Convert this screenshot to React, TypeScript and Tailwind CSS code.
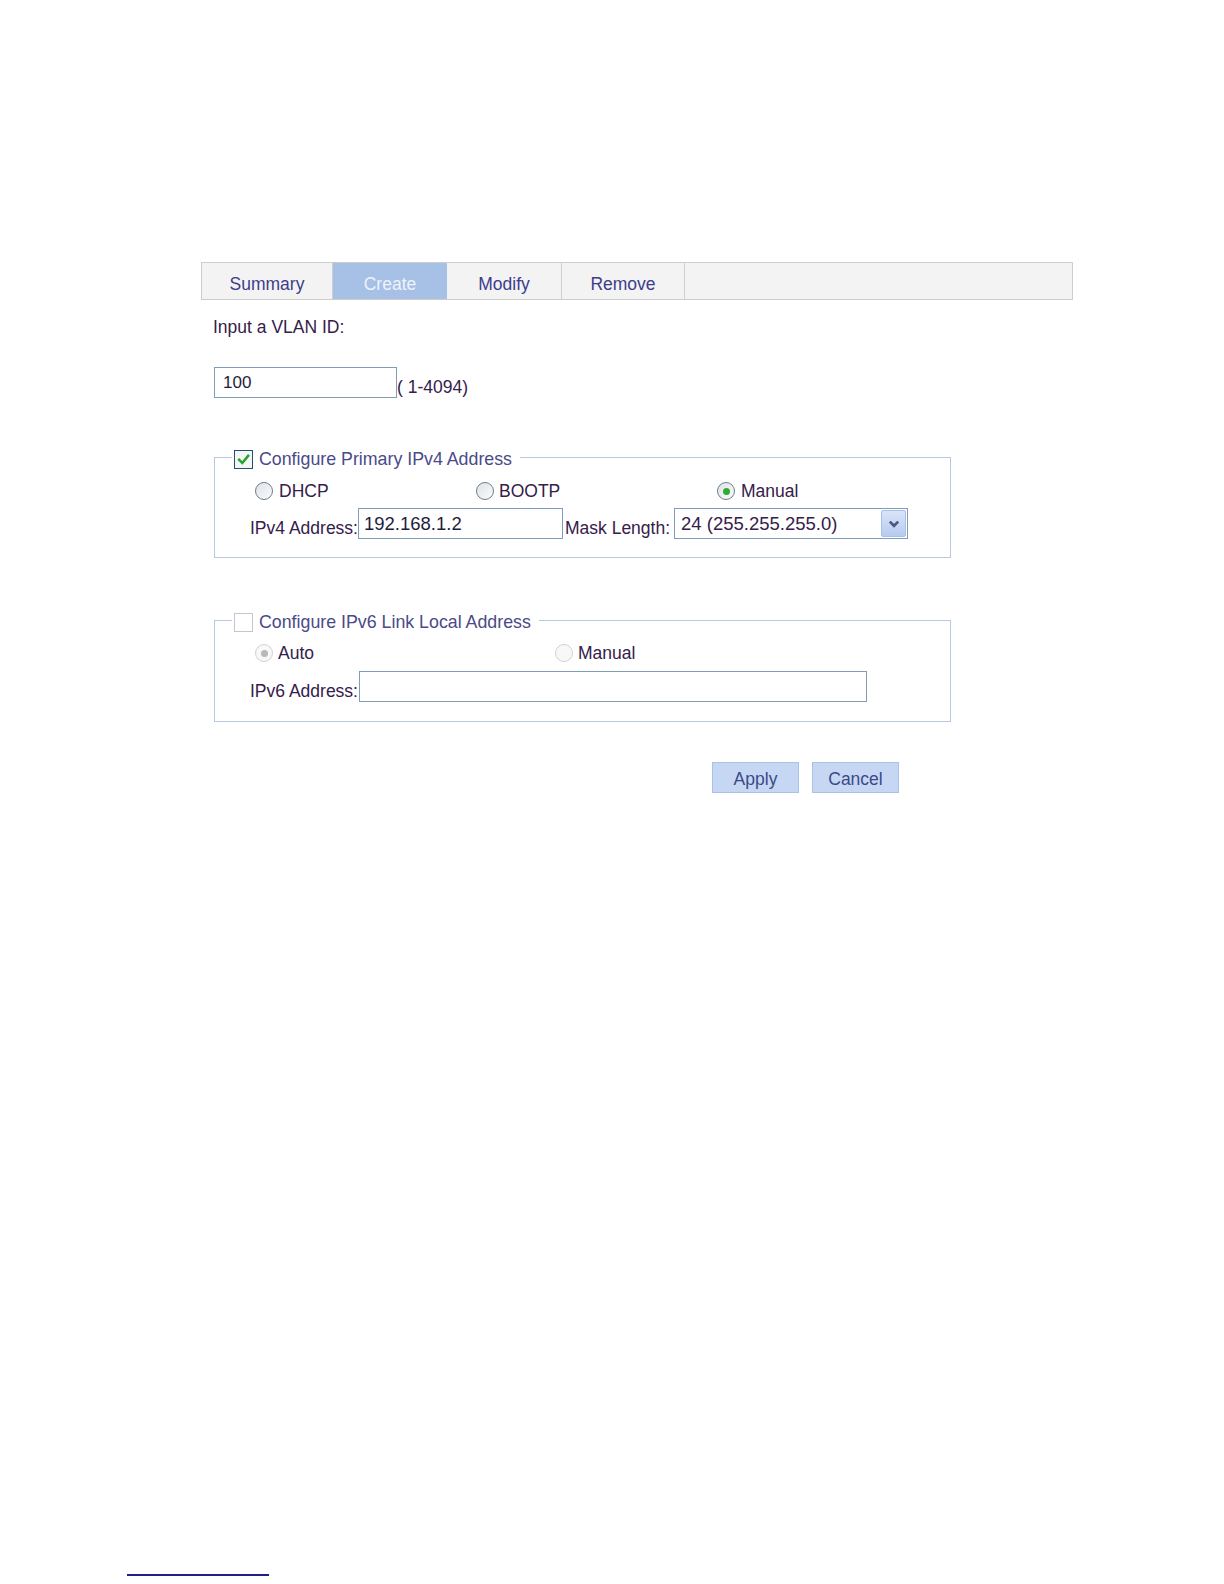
import React from 'react';

const Radio: React.FC<{ checked?: boolean; disabled?: boolean }> = ({ checked, disabled }) => (
  <span
    className={`w-[18px] h-[18px] rounded-full border flex items-center justify-center shrink-0 ${
      disabled ? 'border-[#d2d2d2] bg-[#f8f8f8]' : 'border-[#6d7d8f] bg-linear-to-br from-[#dfe2e7] to-[#fbfbfc]'
    }`}
  >
    {checked && <span className={`w-[7px] h-[7px] rounded-full ${disabled ? 'bg-[#b8b8b8]' : 'bg-[#2dab34]'}`} />}
  </span>
);

const Check: React.FC<{ checked?: boolean; disabled?: boolean }> = ({ checked, disabled }) => (
  <span
    className={`w-[19px] h-[19px] border flex items-center justify-center shrink-0 ${
      disabled ? 'border-[#c6c6c6] bg-white' : 'border-[#23506e] bg-[#f3f5f7]'
    }`}
  >
    {checked && (
      <svg viewBox="0 0 12 12" className="w-[13px] h-[13px]">
        <path d="M2 6.3 L4.9 9.2 L10.3 2.6" stroke="#22a42b" strokeWidth="2.3" fill="none" strokeLinecap="square" />
      </svg>
    )}
  </span>
);

const Legend: React.FC<{ text: string; checked?: boolean; disabled?: boolean }> = ({ text, checked, disabled }) => (
  <div className="-mt-[9px] ml-[17px] pl-[2px] pr-[8px] bg-white w-fit h-[20px] flex items-center gap-[6px]">
    <Check checked={checked} disabled={disabled} />
    <span className="text-[#4a4a88] text-[17.8px] leading-[20px]">{text}</span>
  </div>
);

const tabs = [
  { label: 'Summary', w: 'w-[131px] border-r border-[#cfcfcf]' },
  { label: 'Create', w: 'w-[114px] bg-[#a7c0e6]' },
  { label: 'Modify', w: 'w-[115px] border-r border-[#cfcfcf]' },
  { label: 'Remove', w: 'w-[123px] border-r border-[#cfcfcf]' },
];

const App: React.FC = () => {
  return (
    <div className="w-[1224px] h-[1584px] bg-white flex flex-col font-['Liberation_Sans',Arial,sans-serif] text-[17.5px] text-[#35204a]">
      {/* tab bar */}
      <div className="mt-[262px] ml-[201px] w-[872px] h-[38px] flex border border-[#cdcdcd] bg-[#f3f3f3]">
        {tabs.map((t) => (
          <div key={t.label} className={`${t.w} h-full flex items-center justify-center pt-[6px] text-[#3d3d8c]`}>
            <span className={t.label === 'Create' ? 'text-[#eef3fb]' : ''}>{t.label}</span>
          </div>
        ))}
        <div className="flex-1" />
      </div>

      <div className="ml-[213px] mt-[17px] leading-[20px]">Input a VLAN ID:</div>

      <div className="ml-[214px] mt-[30px] flex items-end">
        <input
          readOnly
          value="100"
          className="w-[183px] h-[31px] border border-[#7f9db9] pl-[8px] text-[17px] text-[#1e1e3c] outline-none"
        />
        <span className="leading-[20px] mb-[1px]">( 1-4094)</span>
      </div>

      {/* IPv4 fieldset */}
      <div className="ml-[214px] mt-[59px] w-[737px] border border-[#b7c9e2] pb-[18px]">
        <Legend text="Configure Primary IPv4 Address" checked />
        <div className="mt-[12px] h-[20px] flex items-center leading-[20px]">
          <div className="ml-[40px] w-[221px] flex items-center gap-[6px]">
            <Radio />
            <span>DHCP</span>
          </div>
          <div className="w-[241px] flex items-center gap-[5px]">
            <Radio />
            <span>BOOTP</span>
          </div>
          <div className="flex items-center gap-[6px]">
            <Radio checked />
            <span>Manual</span>
          </div>
        </div>
        <div className="mt-[7px] flex items-end">
          <span className="ml-[35px] leading-[20px] mb-[1px]">IPv4 Address:</span>
          <input
            readOnly
            value="192.168.1.2"
            className="w-[205px] h-[31px] border border-[#7f9db9] pl-[5px] text-[18.5px] text-[#1e1e3c] outline-none"
          />
          <span className="ml-[2px] leading-[20px] mb-[1px]">Mask Length:</span>
          <div className="ml-[4px] w-[234px] h-[31px] border border-[#7f9db9] flex items-center">
            <span className="flex-1 pl-[6px] text-[18.5px] text-[#35204a]">24 (255.255.255.0)</span>
            <span className="mr-[1px] w-[25px] h-[27px] rounded-[2px] border border-[#a9bfe8] bg-linear-to-b from-[#d9e4f8] to-[#b7cbf1] flex items-center justify-center">
              <svg viewBox="0 0 10 10" className="w-[12px] h-[12px]">
                <path d="M1.5 3 L5 6.5 L8.5 3" stroke="#48577c" strokeWidth="2.2" fill="none" />
              </svg>
            </span>
          </div>
        </div>
      </div>

      {/* IPv6 fieldset */}
      <div className="ml-[214px] mt-[62px] w-[737px] border border-[#b7c9e2] pb-[19px]">
        <Legend text="Configure IPv6 Link Local Address" disabled />
        <div className="mt-[11px] h-[20px] flex items-center leading-[20px]">
          <div className="ml-[40px] w-[300px] flex items-center gap-[5px]">
            <Radio checked disabled />
            <span>Auto</span>
          </div>
          <div className="flex items-center gap-[5px]">
            <Radio disabled />
            <span>Manual</span>
          </div>
        </div>
        <div className="mt-[8px] flex items-end">
          <span className="ml-[35px] leading-[20px] mb-[1px]">IPv6 Address:</span>
          <input
            readOnly
            value=""
            className="ml-[1px] w-[508px] h-[31px] border border-[#7f9db9] pl-[5px] text-[18.5px] outline-none"
          />
        </div>
      </div>

      {/* buttons */}
      <div className="ml-[712px] mt-[40px] flex gap-[13px]">
        <button className="w-[87px] h-[31px] bg-[#c6d7f3] border border-[#aac1e9] text-[#3b4a8a] pt-[3px]">Apply</button>
        <button className="w-[87px] h-[31px] bg-[#c6d7f3] border border-[#aac1e9] text-[#3b4a8a] pt-[3px]">Cancel</button>
      </div>

      <div className="mt-auto mb-[8px] ml-[127px] w-[142px] h-[2px] bg-[#1f1f8c]" />
    </div>
  );
};

export default App;
